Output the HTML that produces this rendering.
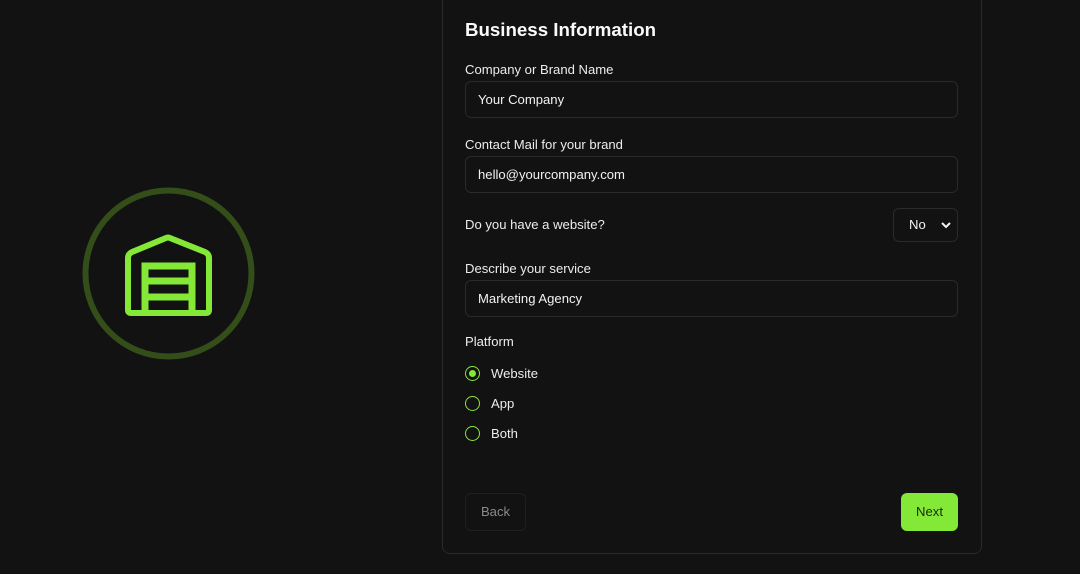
<!DOCTYPE html>
<html><head><style>
*{box-sizing:border-box;margin:0;padding:0}
body{width:1080px;height:574px;background:#121212;font-family:"Liberation Sans",Arial,sans-serif;color:#f2f2f2;position:relative;overflow:hidden}
.card{position:absolute;left:442px;top:-10px;width:540px;height:564px;border:1px solid #2a2a2a;border-radius:8px;background:#121212}
.abs{position:absolute}
h1{position:absolute;left:465px;top:19px;font-size:18.7px;font-weight:bold;color:#fafafa}
.lbl{position:absolute;left:465px;font-size:13.1px;color:#ececec}
.inp{position:absolute;left:465px;width:493px;height:37px;border:1px solid #2a2a2a;border-radius:6px;font-size:13.1px;padding-left:12px;line-height:35px;color:#f2f2f2}
.radio{position:absolute;left:465px;width:15px;height:15px;border:1.5px solid #84e936;border-radius:50%}
.rl{position:absolute;left:491px;font-size:13.1px;color:#ececec}
</style></head><body>
<svg class="abs" style="left:0;top:0" width="340" height="574">
<circle cx="168.5" cy="273.5" r="83" fill="none" stroke="#344e1a" stroke-width="6"/>
<path d="M131 313 Q128 313 128 310 L128 258 Q128 254 132 252 L166 238 Q168 237 170 238 L205 252 Q209 254 209 258 L209 310 Q209 313 206 313 Z" fill="none" stroke="#84e936" stroke-width="6" stroke-linejoin="round"/>
<path d="M145 313 L145 266 L192 266 L192 313 M145 281 L192 281 M145 297 L192 297" fill="none" stroke="#84e936" stroke-width="7"/>
</svg>
<div class="card"></div>
<h1>Business Information</h1>
<div class="lbl" style="top:62px">Company or Brand Name</div>
<div class="inp" style="top:81px">Your Company</div>
<div class="lbl" style="top:137px">Contact Mail for your brand</div>
<div class="inp" style="top:156px">hello@yourcompany.com</div>
<div class="lbl" style="top:217px">Do you have a website?</div>
<div class="abs" style="left:893px;top:208px;width:65px;height:34px;border:1px solid #2a2a2a;border-radius:6px;font-size:13.1px;line-height:32px;padding-left:15px">No
<svg class="abs" style="left:47px;top:12px" width="10" height="8"><path d="M1 2 L5 6 L9 2" fill="none" stroke="#f2f2f2" stroke-width="2"/></svg></div>
<div class="lbl" style="top:261px">Describe your service</div>
<div class="inp" style="top:280px">Marketing Agency</div>
<div class="lbl" style="top:334px">Platform</div>
<div class="radio" style="top:366px"><div style="position:absolute;left:2.5px;top:2.5px;width:7px;height:7px;border-radius:50%;background:#84e936"></div></div>
<div class="rl" style="top:366px">Website</div>
<div class="radio" style="top:396px"></div>
<div class="rl" style="top:396px">App</div>
<div class="radio" style="top:426px"></div>
<div class="rl" style="top:426px">Both</div>
<div class="abs" style="left:465px;top:493px;width:61px;height:38px;border:1px solid #1f1f1f;border-radius:6px;font-size:13.1px;line-height:36px;text-align:center;color:#8a8a8a">Back</div>
<div class="abs" style="left:901px;top:493px;width:57px;height:38px;background:#84e936;border-radius:6px;font-size:13.1px;line-height:38px;text-align:center;color:#1a2a0c">Next</div>
</body></html>
